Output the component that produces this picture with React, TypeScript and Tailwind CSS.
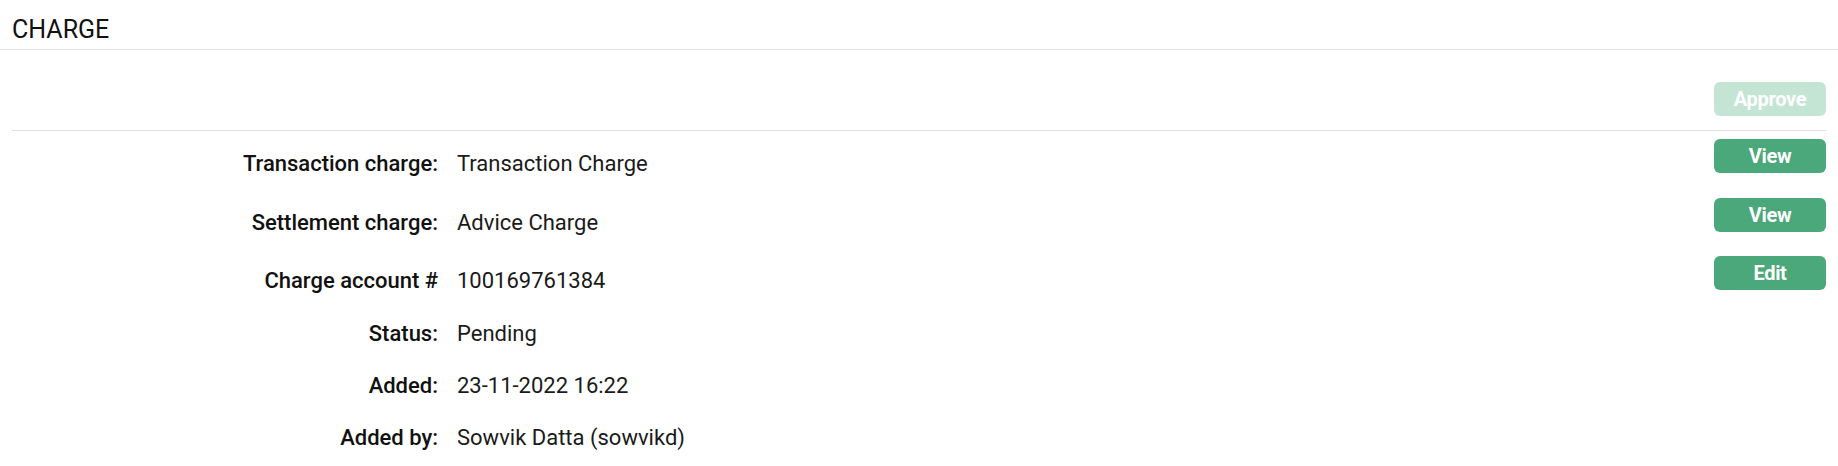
import React from 'react'

interface Row {
  label: string
  value: string
  action?: string
  h: string
}

const rows: Row[] = [
  { label: 'Transaction charge:', value: 'Transaction Charge', action: 'View', h: 'h-[59px]' },
  { label: 'Settlement charge:', value: 'Advice Charge', action: 'View', h: 'h-[58px]' },
  { label: 'Charge account #', value: '100169761384', action: 'Edit', h: 'h-[60px]' },
  { label: 'Status:', value: 'Pending', h: 'h-[52px]' },
  { label: 'Added:', value: '23-11-2022 16:22', h: 'h-[52px]' },
  { label: 'Added by:', value: 'Sowvik Datta (sowvikd)', h: 'h-[53px]' },
]

function GreenButton({ children, disabled }: { children: React.ReactNode; disabled?: boolean }) {
  return (
    <button
      disabled={disabled}
      className={
        disabled
          ? 'w-[112px] h-[34px] rounded-[6px] bg-[#c4e4d4] text-white text-[20px] font-bold leading-none tracking-[-0.3px] cursor-default'
          : 'w-[112px] h-[34px] rounded-[6px] bg-[#4ba87a] text-white text-[20px] font-bold leading-none tracking-[-0.3px] hover:bg-[#3f9a6d]'
      }
    >
      {children}
    </button>
  )
}

export default function App() {
  return (
    <div className="w-full min-h-screen bg-white text-[#1a1a1a] font-['Roboto','Noto_Sans',sans-serif]">
      {/* Header */}
      <div className="px-[12px] pt-[14px] pb-[3px] border-b border-[#e0e0e0]">
        <h1 className="text-[25px] leading-[32px] font-normal text-[#111]">CHARGE</h1>
      </div>

      <div className="px-[12px]">
        {/* Toolbar */}
        <div className="flex justify-end pt-[32px] pb-[14px] border-b border-[#e0e0e0]">
          <GreenButton disabled>Approve</GreenButton>
        </div>

        {/* Details */}
        <div>
          {rows.map(row => (
            <div key={row.label} className={`flex items-start ${row.h} ${row.action ? 'pt-[8px]' : 'pt-[11px]'}`}>
              <div className={`flex flex-1 text-[22px] leading-[30px] ${row.action ? 'mt-[10px]' : ''}`}>
                <div className="w-[426px] text-right font-medium text-[#111]">{row.label}</div>
                <div className="ml-[19px]">{row.value}</div>
              </div>
              {row.action && <GreenButton>{row.action}</GreenButton>}
            </div>
          ))}
        </div>
      </div>
    </div>
  )
}
